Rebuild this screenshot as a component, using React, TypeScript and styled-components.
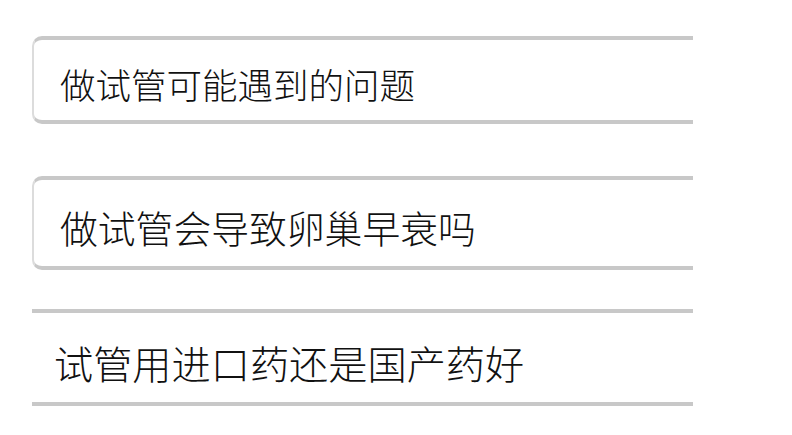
import React from "react";
import styled, { createGlobalStyle } from "styled-components";

const Global = createGlobalStyle`
  html, body { margin: 0; padding: 0; background: #ffffff; }
  body { font-family: "Noto Sans CJK SC", "Noto Sans", sans-serif; }
`;

const List = styled.div`
  display: flex;
  flex-direction: column;
  width: 661px;
  margin-left: 32px;
  padding-top: 36px;
`;

const Item = styled.div<{ $h: number; $gap: number; $rounded: boolean; $pad: number; $size: number; $shift: number }>`
  box-sizing: border-box;
  display: flex;
  align-items: center;
  height: ${(p) => p.$h}px;
  margin-bottom: ${(p) => p.$gap}px;
  border-top: 4px solid #c8c8c8;
  border-bottom: 4px solid #c8c8c8;
  border-left: ${(p) => (p.$rounded ? "2px solid #dcdcdc" : "none")};
  border-radius: ${(p) => (p.$rounded ? "10px 0 0 10px" : "0")};
  padding-left: ${(p) => p.$pad}px;
  padding-top: ${(p) => p.$shift}px;
  font-size: ${(p) => p.$size}px;
  font-weight: 300;
  color: #111111;
  white-space: nowrap;
  overflow: hidden;
`;

const items = [
  { text: "做试管可能遇到的问题", h: 88, gap: 52, rounded: true, pad: 26, size: 35.5, shift: 6 },
  { text: "做试管会导致卵巢早衰吗", h: 94, gap: 39, rounded: true, pad: 26, size: 37.8, shift: 6 },
  { text: "试管用进口药还是国产药好", h: 97, gap: 0, rounded: false, pad: 22, size: 39.2, shift: 8 },
];

export default function App() {
  return (
    <>
      <Global />
      <List>
        {items.map((it) => (
          <Item key={it.text} $h={it.h} $gap={it.gap} $rounded={it.rounded} $pad={it.pad} $size={it.size} $shift={it.shift}>
            {it.text}
          </Item>
        ))}
      </List>
    </>
  );
}
